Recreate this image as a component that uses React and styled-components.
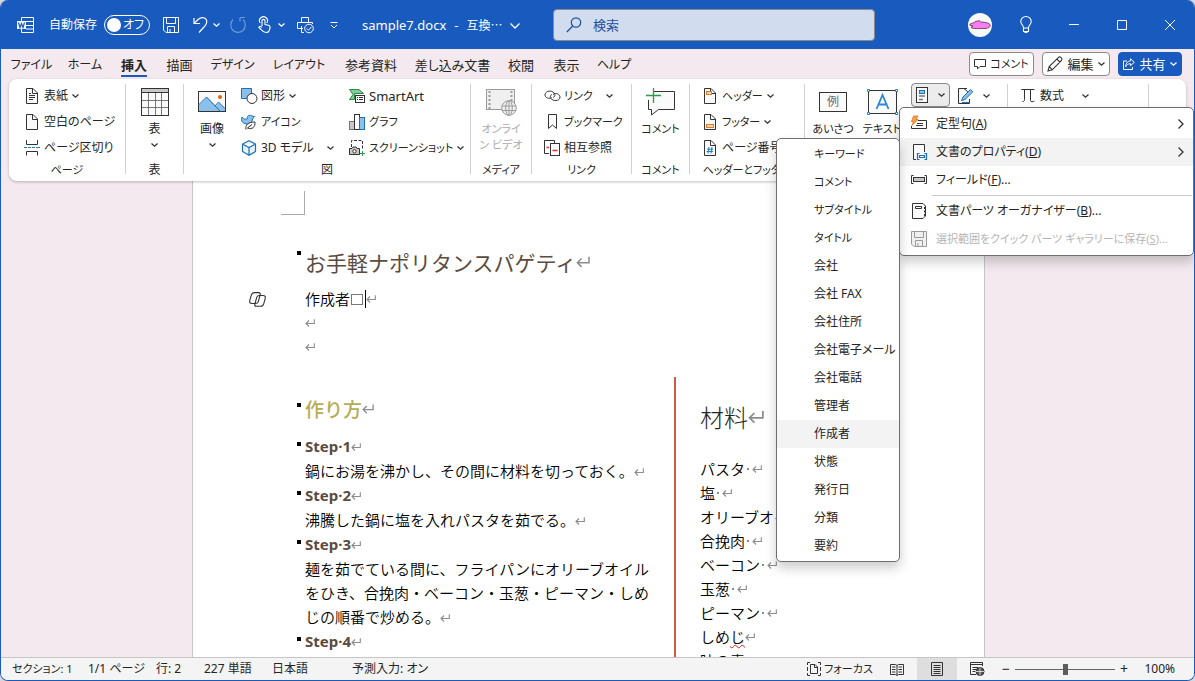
import React, { useState } from 'react'
import styled, { createGlobalStyle, css } from 'styled-components'

const BLUE = '#185abd'
const INK = '#333333'

const GlobalStyle = createGlobalStyle`
  * { box-sizing: border-box; }
  body {
    margin: 0;
    background: #d9d6dc;
    font-family: "Noto Sans", "Noto Sans CJK JP", sans-serif;
    font-size: 12px;
    line-height: 16px;
    color: #242424;
  }
  button, input {
    font: inherit;
    color: inherit;
  }
  button {
    border: 0;
    padding: 0;
    background: none;
    white-space: nowrap;
    font-feature-settings: "palt";
  }
  svg { display: block; flex: none; overflow: visible; }
`

/* ---------- icons ---------- */

const Svg = ({ w = 16, h = 16, color = INK, children }) => (
  <svg width={w} height={h} viewBox={`0 0 ${w} ${h}`} fill="none" stroke={color} aria-hidden="true">
    {children}
  </svg>
)

const Chevron = ({ color = INK, w = 7 }) => (
  <Svg w={w} h={4} color={color}>
    <path d={`M.5 .5L${w / 2} ${w > 8 ? 5 : 3.2}L${w - 0.5} .5`} strokeWidth="1.3" />
  </Svg>
)
const WordIcon = () => (
  <Svg w={17} color="#fff">
    <path d="M4.500 4V.5H16.500V15.500H4.500V12M9 4.500H16M9 8.500H16M9 12H16" />
    <rect x="0" y="4" width="9" height="8" fill="#fff" stroke="none" />
    <path d="M1.500 5.500L3 10.500L4.500 6.500L6 10.500L7.500 5.500" stroke={BLUE} strokeWidth="1.2" />
  </Svg>
)
const SaveIcon = ({ color = '#fff', fill = 'none' }) => (
  <Svg color={color}>
    <path d="M.5 .5H15.500V15.500H3L.5 13Z" fill={fill} />
    <path d="M3.500 .5V6.500H12.500V.5M4.500 15V9.500H11.500V15M7 12V15" />
  </Svg>
)
const UndoIcon = () => (
  <Svg w={15} color="#fff">
    <path d="M1 1V6.500H7M1.200 6.300L5 2.500C8 0 12 0 13.500 3C14.500 6 13 8 11 10L6 15.500" strokeWidth="1.2" />
  </Svg>
)
const RedoIcon = () => (
  <Svg color="#6f9ad8">
    <path d="M3 2.500C0 5.500 0 10.500 3 13.500C6 16 11 16 13.500 13C16 10 16 5 13 2.500M10 .5V4.500M10 .5H15" strokeWidth="1.2" />
  </Svg>
)
const TouchIcon = () => (
  <Svg w={13} h={17} color="#fff">
    <path d="M2.200 7A4 4 0 1 1 8.800 7" strokeWidth="1.1" />
    <path d="M4 10V4.500C4 3 7 3 7 4.500V8.500L10.500 9.200C12 9.600 12.300 10.500 12 12L11 15C10.500 16.300 9.500 16.500 8 16.500C5 16.500 4 14.500 2 12.500L.8 11.300C1.500 10 3 10 4 11.500" strokeWidth="1.1" />
  </Svg>
)
const PrinterIcon = () => (
  <Svg w={17} color="#fff">
    <path d="M4.500 5V.5H11.500V5M6 11.500H.5V5.500H15.500V7M4.500 9V15.500H7" />
    <circle cx="12" cy="11.500" r="4.300" />
    <path d="M9.800 11.500L11.500 13.300L14.500 9.800" />
  </Svg>
)
const CustomizeIcon = () => (
  <Svg w={8} h={8} color="#fff">
    <path d="M.5 1.500H7.500M1 4L4 7L7 4" />
  </Svg>
)
const SearchIcon = () => (
  <Svg color="#1d4f9e">
    <circle cx="10" cy="5.500" r="4.700" strokeWidth="1.200" />
    <path d="M6.700 9L.8 15" strokeWidth="1.200" />
  </Svg>
)
const Avatar = () => (
  <svg width="24" height="24" viewBox="0 0 24 24" role="img" aria-label="アカウント">
    <circle cx="12" cy="12" r="12" fill="#f7faf7" />
    <path d="M2 11C4 10 6 10 7 9C8 7 9 9 10 8C11 7 12 8 12.500 9C16 9 20 9.500 22 11.500C23 13 21 15.500 17 15.500C11 15.500 5 16 3 14.500L5 13L2 12.500Z" fill="#f77df0" stroke="#5c2b58" strokeWidth=".8" />
  </svg>
)
const BulbIcon = () => (
  <Svg w={12} h={17} color="#fff">
    <path d="M3.500 12C3.500 9 .8 8.500 .8 5.500A5.200 5 0 0 1 11.200 5.500C11.200 8.500 8.500 9 8.500 12ZM3.500 12V15.500H8.500V12M4.500 16.500H7.500" strokeWidth="1.1" />
  </Svg>
)
const MinIcon = () => <Svg w={10} h={10} color="#fff"><path d="M0 4.500H10" /></Svg>
const MaxIcon = () => <Svg w={10} h={10} color="#fff"><path d="M.5 .5H9.500V9.500H.5Z" /></Svg>
const CloseIcon = () => <Svg w={10} h={10} color="#fff"><path d="M0 0L10 10M10 0L0 10" /></Svg>

const BubbleIcon = () => (
  <Svg w={12} h={12}>
    <path d="M.5 1.500H11.500V8.500H6L3.500 11V8.500H.5Z" />
  </Svg>
)
const PencilIcon = () => (
  <Svg>
    <path d="M1 15L2.200 10.500L11.500 1.300C13 0 16 2.500 14.500 4.500L5.300 13.800ZM9.800 3L13 6.200M2.200 10.500L5.300 13.800" strokeWidth="1.1" />
  </Svg>
)
const ShareIcon = () => (
  <Svg w={12} h={12} color="#fff">
    <path d="M4 3H.5V11.500H9.500V9M7.500 .8L11.300 4.300L7.500 7.700V5.700C5 5.700 3.500 7 2.700 8.800C2.700 5.500 4.500 3 7.500 2.800Z" />
  </Svg>
)

const PageShape = () => <path d="M2.500 .5H9L13.500 5V15.500H2.500ZM8.500 .5V5.500H13.500" fill="#fafafa" />
const CoverIcon = () => <Svg><PageShape /><path d="M5 7.500H11M5 9.500H11M5 11.500H9M5 5.500H7" /></Svg>
const BlankIcon = () => <Svg><PageShape /></Svg>
const BreakIcon = () => (
  <Svg>
    <path d="M2.500 0V4.500H13.500V0M2.500 15.500V11.500H13.500V15.500" />
    <path d="M0 7.500H3M4 7.500H7M8 7.500H11M12 7.500H16" stroke="#1f7fc4" />
  </Svg>
)
const TableIcon = () => (
  <Svg w={28} h={28}>
    <rect x=".5" y=".5" width="27" height="27" fill="#fafafa" />
    <rect x="1" y="1" width="26" height="3" fill="#c8c8c8" stroke="none" />
    <path d="M.5 4.500H27.500" />
    <path d="M1 12.500H27M1 19.500H27M7.500 5V27M14.500 5V27M20.500 5V27" stroke="#777" />
  </Svg>
)
const ImageIcon = () => (
  <Svg w={28} h={22}>
    <rect x=".5" y=".5" width="27" height="20" fill="#fafafa" />
    <path d="M1 14L9 6L18 15L21 11.500L27 17.500V20H1Z" fill="#8bc0ea" stroke="none" />
    <path d="M.5 14L8.500 6L22.500 20.500M17 15L20.500 11L27 17.500" stroke="#1e6fb5" />
    <circle cx="22" cy="6" r="2" fill="#d9690f" stroke="none" />
  </Svg>
)
const ShapesIcon = () => (
  <Svg w={17}>
    <path d="M.5 .5H10.500V10.500H.5Z" fill="#8bc0ea" stroke="#1e6fb5" />
    <circle cx="11" cy="10.500" r="5" fill="#fafafa" />
  </Svg>
)
const DuckIcon = () => (
  <Svg>
    <path d="M1 3C3 6 5 5 6 5C6 1 9 .5 11 2L13.500 2.500L11.500 5C11.500 8 9 10 6 10C3 10 .5 8 .5 5.500Z" fill="#8bc0ea" stroke="#1e6fb5" />
    <path d="M5 15.500C4 11 7 8 14 8C14.500 13 11 16 6.500 14L11 10.500" fill="#fafafa" />
  </Svg>
)
const CubeIcon = () => (
  <Svg color="#1e6fb5">
    <path d="M8 .7L14.500 4V11.500L8 15.300L1.500 11.500V4ZM1.500 4L8 7.500L14.500 4M8 7.500V15" fill="#e6f3fc" strokeWidth="1.200" />
  </Svg>
)
const SmartArtIcon = () => (
  <Svg>
    <path d="M.5 1.500H10L14.500 5.500H5.500V11.500H.5L4 6.500Z" fill="#7fcf96" stroke="#2b8a45" />
    <rect x="6.500" y="7.500" width="9" height="7" fill="#fff" />
    <path d="M8 9.500H9M10 9.500H14M8 11.500H9M10 11.500H14" />
  </Svg>
)
const ChartIcon = () => (
  <Svg>
    <rect x=".5" y="7.500" width="5" height="8" fill="#c8c8c8" stroke="#777" />
    <rect x="5.500" y=".5" width="5" height="15" fill="#fff" />
    <rect x="10.500" y="3.500" width="5" height="12" fill="#8bc0ea" stroke="#1e6fb5" />
  </Svg>
)
const ScreenshotIcon = () => (
  <Svg>
    <path d="M2.500 7V.5H13.500V10" strokeDasharray="3 1.500" />
    <path d="M.5 8.500H3L4 7H7L8 8.500H10.500V14.500H.5Z" fill="#c8c8c8" />
    <circle cx="5.500" cy="11.300" r="1.700" fill="#fff" />
    <path d="M13.500 11V16M11 13.500H16" stroke="#2b9a4a" />
  </Svg>
)
const VideoIcon = () => (
  <Svg w={31} h={27} color="#9a9a9a">
    <rect x=".5" y=".5" width="28" height="20" fill="#f0f0f0" />
    <path d="M3.500 2V20M25.500 2V20" strokeWidth="2" strokeDasharray="2 2" />
    <circle cx="23" cy="19" r="7.300" fill="#f0f0f0" />
    <ellipse cx="23" cy="19" rx="3.300" ry="7.300" />
    <path d="M16 17H30M16 21.500H30M23 12V26" />
  </Svg>
)
const LinkIcon = () => (
  <Svg w={17}>
    <path d="M7.500 9.500C5 11.500 1 9.500 1 7C1 3.500 5.500 2 9 4C12 6 11 9 9 9.500" />
    <path d="M9 6.500C12 4 16 6.500 16 9C16 12.500 11.500 13.500 8 11.500C5.500 10 6 7 8 6.500" />
  </Svg>
)
const BookmarkIcon = () => <Svg><path d="M4.500 .5H12.500V14.500L8.500 11L4.500 14.500Z" fill="#fafafa" /></Svg>
const CrossRefIcon = () => (
  <Svg>
    <path d="M5 13.500H.5V.5H10.500V3" />
    <rect x="6.500" y="3.500" width="9" height="12" fill="#fafafa" />
    <path d="M2.500 7.500H5M8.500 10.500H13.500" stroke="#e03030" strokeWidth="1.3" />
  </Svg>
)
const CommentIcon = () => (
  <Svg w={29} h={28}>
    <path d="M8 3.500H28.500V21.500H12.500L5.500 27V21.500H2.500V12" fill="#fafafa" />
    <path d="M7.500 0V15M0 7.500H15" stroke="#2b9a4a" strokeWidth="1.3" />
  </Svg>
)
const HeaderIcon = () => <Svg><PageShape /><rect x="4.500" y="3.500" width="5" height="3" fill="#fbd5b5" stroke="#e07a1f" /></Svg>
const FooterIcon = () => <Svg><PageShape /><rect x="4.500" y="10.500" width="7" height="3" fill="#fbd5b5" stroke="#e07a1f" /></Svg>
const PageNumIcon = () => (
  <Svg><PageShape /><path d="M7 7L6 13.500M10 7L9 13.500M5 9.200H11.200M4.700 11.500H11" stroke="#1f7fc4" /></Svg>
)
const ExampleIcon = styled.span`
  width: 28px;
  height: 20px;
  border: 1px solid ${INK};
  background: #fafafa;
  color: #6a6a6a;
  line-height: 17px;
  text-align: center;
`
const TextBoxIcon = () => (
  <Svg w={31} h={26}>
    <rect x="1.500" y="1.500" width="28" height="23" fill="#fafafa" />
    <path d="M9.500 20L15.500 6L21.500 20M11.500 15.500H19.500" stroke="#2b88d8" strokeWidth="1.800" />
    <path d="M.5 .5h2v2h-2zM28.500 .5h2v2h-2zM.5 23.500h2v2h-2zM28.500 23.500h2v2h-2z" fill="#fff" stroke="#1f7fc4" />
  </Svg>
)
const PartsIcon = () => (
  <Svg w={13}>
    <rect x=".5" y=".5" width="11" height="15" fill="#fafafa" />
    <rect x="3.500" y="3.500" width="5" height="3" fill="#8bc0ea" stroke="#1e6fb5" />
    <path d="M3 9H9M3 12.500H7" stroke="#777" strokeWidth="1.500" />
  </Svg>
)
const SignatureIcon = () => (
  <Svg>
    <path d="M9 .5H.5V15.500H11.500V11M6 .5L11 5" fill="#fafafa" />
    <path d="M3.500 12.500L5 9L12.500 1.500L14.800 3.800L7 11.500Z" fill="#8bc0ea" stroke="#1e6fb5" />
    <path d="M4 14.500H12" stroke="#1e6fb5" />
  </Svg>
)
const PiIcon = () => <Svg w={14} h={14}><path d="M.5 1V.5H13.500M3.500 .5V10.500C3.500 12.500 2.500 12.500 1.500 12.500M9.500 .5V11.500C9.500 13 12 13 13.500 12" /></Svg>

const AutoTextIcon = () => (
  <Svg>
    <path d="M7 4.500H15.500V12.500H.5V10M6 7.500H12M5 9.500H12" />
    <path d="M2.500 0H7L5 3.500H7L1 9.500L2.500 5.500H.5Z" fill="#f7a34b" stroke="#d9690f" strokeWidth=".7" />
  </Svg>
)
const DocPropIcon = () => (
  <Svg>
    <path d="M5 15.500H2.500V.5H13.500V8" fill="#fafafa" />
    <path d="M8.500 9.500H6.500V15.500H8.500M13.500 9.500H15.500V15.500H13.500M8.500 11.500H13.500V13.500H8.500Z" stroke="#1e6fb5" strokeWidth="1.200" />
  </Svg>
)
const FieldIcon = () => (
  <Svg>
    <path d="M2.500 3.500H.5V11.500H2.500M13.500 3.500H15.500V11.500H13.500" />
    <rect x="2.500" y="5.500" width="11" height="4" fill="#c8c8c8" />
  </Svg>
)
const OrganizerIcon = () => (
  <Svg>
    <path d="M1.500 .5H12L14.500 3V13L12 15.500H1.500Z" fill="#fafafa" />
    <path d="M4.500 3.500H10.500V5.500H4.500ZM13.500 4V6M13.500 7.500V9.500M13.500 11V13" />
  </Svg>
)
const ArrowRight = () => <Svg w={6} h={10}><path d="M.5 .5L5 5L.5 9.500" strokeWidth="1.3" /></Svg>

const CopilotIcon = () => (
  <Svg w={17} h={15}>
    <path d="M5.500 .6H9.500C11.500 .6 11.500 2 11 3.500L9.200 9.800C8.800 11.200 8 11.500 6.500 11.500H3C.8 11.500 .3 10.300 .9 8.200L2.300 3.200C2.900 1.200 3.800 .6 5.500 .6Z" strokeWidth="1.100" />
    <path d="M11.500 14.300H7.500C5.500 14.300 5.500 13 6 11.500L7.800 5.200C8.200 3.800 9 3.500 10.500 3.500H14C16.200 3.500 16.700 4.700 16.100 6.800L14.700 11.800C14.100 13.800 13.200 14.300 11.500 14.300Z" strokeWidth="1.100" />
  </Svg>
)
const FocusIcon = () => (
  <Svg w={14} h={14}>
    <path d="M3 .5H.5V3M11 .5H13.500V3M.5 11V13.500H3M13.500 11V13.500H11M.5 5V9M13.500 5V9" />
    <path d="M3.500 2.500H8L10.500 5V11.500H3.500ZM7.500 2.500V5.500H10.500" />
  </Svg>
)
const ReadIcon = () => (
  <Svg w={14} h={13}>
    <path d="M.5 1.500H5.500L7 2.500L8.500 1.500H13.500V11.500H8.500L7 12.500L5.500 11.500H.5ZM7 2.500V12M2 4H5.500M2 6.500H5.500M2 9H5.500M8.500 4H12M8.500 6.500H12M8.500 9H12" />
  </Svg>
)
const PrintViewIcon = () => (
  <Svg w={12} h={14}>
    <path d="M.5 .5H11.500V13.500H.5ZM2.500 3.500H9.500M2.500 5.500H9.500M2.500 7.500H9.500M2.500 9.500H9.500M2.500 11.500H9.500" />
  </Svg>
)
const WebViewIcon = () => (
  <Svg w={14} h={14}>
    <path d="M6 12.500H.5V.5H12.500V4M.5 2.500H12.500M2.500 5.500H8M2.500 7.500H6M2.500 9.500H5" />
    <circle cx="10" cy="9.500" r="4" fill="#555" />
    <path d="M6 9.500H14M10 5.500V13.500" stroke="#f4f4f4" strokeWidth=".8" />
  </Svg>
)
const Mark = ({ size = 10 }) => (
  <svg width={size} height={size} viewBox="0 0 10 10" fill="none" stroke="#8c8c8c" strokeWidth="1.1" aria-hidden="true">
    <path d="M9.300 1.200V5.500H1M4 2.500L1 5.500L4 8.500" />
  </svg>
)

/* ---------- window and title bar ---------- */

const Window = styled.div`
  display: flex;
  flex-direction: column;
  height: 100vh;
  overflow: hidden;
  border: 1px solid ${BLUE};
  border-top: 0;
  border-radius: 8px;
  background: #f3e9ee;
`
const TitleBar = styled.header`
  display: flex;
  align-items: center;
  flex: none;
  height: 49px;
  padding-left: 6px;
  background: ${BLUE};
  color: #fff;
`
const QuickAccess = styled.div`
  display: flex;
  align-items: center;
  flex: 0 0 46%;
  font-feature-settings: "palt";
`
const Slot = styled.button`
  display: flex;
  align-items: center;
  justify-content: center;
  flex: none;
  width: ${p => p.$w}px;
  height: 32px;
`
const Toggle = styled.button`
  display: flex;
  align-items: center;
  justify-content: space-between;
  width: 46px;
  height: 20px;
  margin: 0 1px;
  padding: 0 5px 0 2px;
  border: 1px solid #fff;
  border-radius: 10px;
  &::before {
    content: "";
    width: 14px;
    height: 14px;
    border-radius: 50%;
    background: #fff;
  }
`
const FileName = styled.button`
  display: flex;
  align-items: center;
  gap: 8px;
  padding-left: 17px;
  font-size: 13px;
`
const Mode = styled.span`
  font-family: "Noto Sans CJK JP", sans-serif;
  font-size: 12px;
`
const SearchBox = styled.label`
  display: flex;
  align-items: center;
  gap: 11px;
  flex: 0 1 322px;
  height: 32px;
  padding-left: 12px;
  border: 1px solid #8a8a8a;
  border-radius: 4px;
  background: #d1dcee;
  input {
    flex: 1;
    min-width: 0;
    padding: 0;
    border: 0;
    outline: 0;
    background: none;
    font-size: 13px;
  }
  input::placeholder { color: #1d4f9e; opacity: 1; }
`
const Caption = styled.div`
  display: flex;
  margin-left: auto;
`

/* ---------- tabs ---------- */

const TabRow = styled.nav`
  display: flex;
  align-items: center;
  flex: none;
  height: 30px;
  padding: 0 12px 0 3px;
`
const Tab = styled.button`
  display: flex;
  flex-direction: column;
  align-items: center;
  flex: none;
  width: ${p => p.$w}px;
  padding-top: 4px;
  font-size: ${p => p.$size}px;
  line-height: 20px;
  font-weight: ${p => (p.$active ? 700 : 400)};
  &::after {
    content: "";
    width: 26px;
    height: 2px;
    background: ${p => (p.$active ? BLUE : 'transparent')};
  }
`
const Actions = styled.div`
  display: flex;
  gap: 8px;
  margin-left: auto;
`
const ActionButton = styled.button`
  display: flex;
  align-items: center;
  justify-content: center;
  gap: 4px;
  width: ${p => p.$w}px;
  height: 24px;
  border: 1px solid ${p => (p.$primary ? BLUE : '#8a8a8a')};
  border-radius: 4px;
  background: ${p => (p.$primary ? BLUE : '#fff')};
  color: ${p => (p.$primary ? '#fff' : '#242424')};
  font-size: ${p => p.$size || 13}px;
`

/* ---------- ribbon ---------- */

const RibbonBar = styled.div`
  display: flex;
  flex: none;
  position: relative;
  z-index: 2;
  height: 102px;
  margin: 0 8px;
  border-radius: 8px;
  background: #fff;
  box-shadow: 0 1px 3px rgba(0, 0, 0, .25);
`
const GroupBox = styled.section`
  display: flex;
  flex-direction: column;
  flex: none;
  width: ${p => p.$w}px;
  padding-top: 4px;
`
const GroupBody = styled.div`
  display: flex;
  height: 78px;
  padding-left: ${p => p.$pad || 0}px;
`
const GroupLabel = styled.div`
  text-align: center;
  font-size: ${p => p.$size}px;
  line-height: 18px;
  white-space: nowrap;
  font-feature-settings: "palt";
`
const Sep = styled.div`
  flex: none;
  width: 1px;
  margin: 5px 0 7px;
  background: #d1d1d1;
`
const Column = styled.div`
  display: flex;
  flex-direction: column;
  flex: none;
  width: ${p => p.$w}px;
`
const Small = styled.button`
  display: flex;
  align-items: center;
  gap: 3px;
  height: 26px;
  font-size: ${p => p.$size}px;
  > svg:last-child:not(:first-child) {
    margin-left: ${p => (p.$spread ? 'auto' : '1px')};
  }
`
const IconCell = styled.span`
  display: flex;
  justify-content: center;
  flex: none;
  width: 18px;
`
const Big = styled.button`
  display: flex;
  flex-direction: column;
  align-items: center;
  flex: none;
  width: ${p => p.$w}px;
  padding-top: 4px;
  color: ${p => (p.disabled ? '#ababab' : 'inherit')};
  font-size: ${p => p.$size}px;
  white-space: pre-line;
  > svg:last-child { margin-top: 6px; }
`
const BigIcon = styled.span`
  display: flex;
  align-items: center;
  justify-content: center;
  height: 30px;
  margin-bottom: 4px;
  font-size: 12px;
`
const Anchor = styled.div`
  position: relative;
  width: 39px;
  height: 26px;
  margin-left: 8px;
`
const SplitButton = styled.button`
  display: flex;
  align-items: center;
  justify-content: center;
  gap: 9px;
  width: ${p => p.$w}px;
  height: ${p => (p.$open ? 24 : 26)}px;
  ${p => p.$open && css`
    border: 1px solid #8a8a8a;
    border-radius: 4px;
    background: #ececec;
  `}
`

/* ---------- menus ---------- */

const menuBox = css`
  position: absolute;
  margin: 0;
  list-style: none;
  border: 1px solid #6e6e6e;
  border-radius: 5px;
  background: #fff;
  box-shadow: 0 6px 12px rgba(0, 0, 0, .2);
`
const PartsMenu = styled.ul`
  ${menuBox}
  top: 24px;
  left: -12px;
  width: 295px;
  padding: 2px 0;
`
const SubMenu = styled.ul`
  ${menuBox}
  top: 0;
  right: 100%;
  width: 124px;
  padding: 1px 0;
`
const MenuRow = styled.li`
  position: relative;
`
const MenuItem = styled.button`
  display: flex;
  align-items: center;
  gap: 9px;
  width: 100%;
  height: 28px;
  padding: 0 9px 0 ${p => (p.$sub ? 37 : 11)}px;
  background: ${p => (p.$active ? '#f3f3f3' : 'none')};
  color: ${p => (p.disabled ? '#b5b5b5' : '#242424')};
  font-size: ${p => p.$size || 12}px;
  text-align: left;
  > svg:last-child:not(:first-child) { margin-left: auto; }
`
const Divider = styled.li`
  height: 1px;
  margin: 1px 1px 1px 32px;
  background: #c8c8c8;
`

/* ---------- document ---------- */

const Canvas = styled.main`
  display: flex;
  justify-content: center;
  flex: 1;
  min-height: 0;
  padding-right: 18px;
  overflow: hidden;
`
const Sheet = styled.article`
  display: flex;
  flex-direction: column;
  flex: 0 1 793px;
  border: 1px solid #c6c6c6;
  border-width: 0 1px;
  background: #fff;
  color: #000;
  font-family: "Noto Sans CJK JP", sans-serif;
  font-size: 15px;
  font-weight: 350;
  line-height: 24px;
`
const CornerMark = styled.div`
  flex: none;
  width: 24px;
  height: 24px;
  margin: 10px 0 28px 88px;
  border: 1px solid #aaa;
  border-width: 0 1px 1px 0;
`
const Line = styled.div`
  display: grid;
  flex: none;
  grid-template-columns: 112px 1fr;
  align-items: center;
`
const Gutter = styled.div`
  display: flex;
  align-self: ${p => (p.$bullet ? 'start' : 'center')};
  padding-left: 56px;
  ${p => p.$bullet && css`
    justify-content: flex-end;
    padding: 8px 4px 0 0;
    &::before {
      content: "";
      width: 4px;
      height: 4px;
      background: #000;
    }
  `}
`
const inlineText = css`
  display: flex;
  align-items: center;
  margin: 0;
  white-space: nowrap;
`
const DocTitle = styled.h1`
  ${inlineText}
  margin-bottom: 6px;
  font-size: 21px;
  line-height: 38px;
  font-weight: 400;
  color: #5b4c3f;
`
const HowTo = styled.h2`
  ${inlineText}
  margin-bottom: 11px;
  font-size: 19px;
  line-height: 28px;
  font-weight: 500;
  color: #b5ad54;
`
const StepTitle = styled.h3`
  ${inlineText}
  font-family: "Noto Sans", sans-serif;
  font-size: 15px;
  line-height: 25px;
  font-weight: 700;
  color: #5b4c3f;
`
const Plain = styled.p`
  ${inlineText}
  min-height: 24px;
`
const Placeholder = styled.span`
  width: 12px;
  height: 11px;
  margin: 0 2px 0 1px;
  border: 1px solid #777;
`
const Caret = styled.span`
  width: 1px;
  height: 18px;
  background: #000;
`
const Columns = styled.div`
  display: flex;
  flex: 1;
  min-height: 0;
  margin-top: 18px;
`
const Method = styled.section`
  flex: none;
  width: 483px;
  padding-top: 18px;
  border-right: 2px solid #cf5b45;
`
const StepText = styled.p`
  margin: 0 23px 0 112px;
  line-break: strict;
  svg { display: inline-block; }
`
const Ingredients = styled.section`
  flex: 1;
  min-width: 0;
  padding: 24px 0 0 24px;
  h2 {
    ${inlineText}
    margin-bottom: 24px;
    font-size: 24px;
    line-height: 32px;
    font-weight: 300;
    color: #242424;
  }
  ul {
    margin: 0;
    padding: 0;
    list-style: none;
  }
  li {
    ${inlineText}
    height: 24px;
  }
`
const Space = styled.span`
  width: 2px;
  height: 2px;
  margin: 0 3px 0 2px;
  background: #8c8c8c;
`
const Misspelt = styled.span`
  text-decoration: underline wavy #e02020 1px;
`

/* ---------- status bar ---------- */

const StatusBar = styled.footer`
  display: flex;
  align-items: center;
  flex: none;
  height: 23px;
  padding: 0 19px 0 11px;
  border-top: 1px solid #c6c6c6;
  background: #f4f4f4;
`
const StatusItem = styled.button`
  flex: none;
  width: ${p => p.$w}px;
  font-size: ${p => p.$size || 12}px;
  text-align: ${p => (p.$end ? 'right' : 'left')};
`
const StatusRight = styled.div`
  display: flex;
  align-items: center;
  margin-left: auto;
  height: 100%;
`
const Views = styled.div`
  display: flex;
  height: 100%;
  margin-right: 4px;
`
const ViewButton = styled.button`
  display: flex;
  align-items: center;
  justify-content: center;
  gap: 3px;
  width: ${p => p.$w || 40}px;
  height: 100%;
  background: ${p => (p.$active ? '#dedede' : 'none')};
  font-size: 11px;
`
const ZoomStep = styled.button`
  width: 10px;
  font-size: 14px;
`
const ZoomSlider = styled.input`
  appearance: none;
  width: 100px;
  height: 12px;
  margin: 0 4px;
  background: linear-gradient(#666, #666) center / 100% 1px no-repeat;
  &::-webkit-slider-thumb {
    appearance: none;
    width: 5px;
    height: 11px;
    background: #5c5c5c;
  }
`

const tabs = [
  ['ファイル', 55], ['ホーム', 52], ['挿入', 46], ['描画', 45], ['デザイン', 61], ['レイアウト', 72],
  ['参考資料', 72], ['差し込み文書', 91], ['校閲', 46], ['表示', 45], ['ヘルプ', 50],
]
const properties = [
  'キーワード', 'コメント', 'サブタイトル', 'タイトル', '会社', '会社 FAX', '会社住所', '会社電子メール',
  '会社電話', '管理者', '作成者', '状態', '発行日', '分類', '要約',
]
const steps = [
  '鍋にお湯を沸かし、その間に材料を切っておく。',
  '沸騰した鍋に塩を入れパスタを茹でる。',
  '麺を茹でている間に、フライパンにオリーブオイルをひき、合挽肉・ベーコン・玉葱・ピーマン・しめじの順番で炒める。',
  '',
]
const ingredients = ['パスタ', '塩', 'オリーブオイル', '合挽肉', 'ベーコン', '玉葱', 'ピーマン', 'しめじ', '味の素']

// kana-only labels are set one size smaller than those with kanji
const labelSize = (text, base = 12) => (/^[\u3040-\u30ff\s]+$/.test(text) ? base - 1 : base)

const Group = ({ w, pad, label, children }) => (
  <GroupBox $w={w}>
    <GroupBody $pad={pad}>{children}</GroupBody>
    <GroupLabel $size={labelSize(label)}>{label}</GroupLabel>
  </GroupBox>
)

const SmallButton = ({ icon, label, chevron, spread, latin }) => (
  <Small $spread={spread} $size={latin ? 13 : labelSize(label)}>
    <IconCell>{icon}</IconCell>
    <span>{label}</span>
    {chevron && <Chevron />}
  </Small>
)

const BigButton = ({ w, icon, label, chevron, disabled }) => (
  <Big $w={w} $size={labelSize(label)} disabled={disabled}>
    <BigIcon>{icon}</BigIcon>
    <span>{label}</span>
    {chevron && <Chevron />}
  </Big>
)

const Key = ({ k, dots }) => <>(<u>{k}</u>){dots && '...'}</>

const QuickPartsMenu = () => (
  <PartsMenu>
    <MenuRow>
      <MenuItem><AutoTextIcon /><span>定型句<Key k="A" /></span><ArrowRight /></MenuItem>
    </MenuRow>
    <MenuRow>
      <MenuItem $active><DocPropIcon /><span>文書のプロパティ<Key k="D" /></span><ArrowRight /></MenuItem>
      <SubMenu>
        {properties.map(name => (
          <li key={name}>
            <MenuItem $sub $size={labelSize(name)} $active={name === '作成者'}>{name}</MenuItem>
          </li>
        ))}
      </SubMenu>
    </MenuRow>
    <MenuRow>
      <MenuItem><FieldIcon /><span>フィールド<Key k="F" dots /></span></MenuItem>
    </MenuRow>
    <Divider />
    <MenuRow>
      <MenuItem><OrganizerIcon /><span>文書パーツ オーガナイザー<Key k="B" dots /></span></MenuItem>
    </MenuRow>
    <MenuRow>
      <MenuItem $size={11} disabled>
        <SaveIcon color="#9a9a9a" fill="#f0f0f0" />
        <span>選択範囲をクイック パーツ ギャラリーに保存<Key k="S" dots /></span>
      </MenuItem>
    </MenuRow>
  </PartsMenu>
)

const Ribbon = () => {
  const [open, setOpen] = useState(true)

  return (
    <RibbonBar>
      <Group w={116} pad={14} label="ページ">
        <Column $w={100}>
          <SmallButton icon={<CoverIcon />} label="表紙" chevron />
          <SmallButton icon={<BlankIcon />} label="空白のページ" />
          <SmallButton icon={<BreakIcon />} label="ページ区切り" />
        </Column>
      </Group>
      <Sep />
      <Group w={57} label="表">
        <BigButton w={57} icon={<TableIcon />} label="表" chevron />
      </Group>
      <Sep />
      <Group w={286} label="図">
        <BigButton w={56} icon={<ImageIcon />} label="画像" chevron />
        <Column $w={108}>
          <SmallButton icon={<ShapesIcon />} label="図形" chevron />
          <SmallButton icon={<DuckIcon />} label="アイコン" />
          <Column $w={94}>
            <SmallButton icon={<CubeIcon />} label="3D モデル" chevron spread />
          </Column>
        </Column>
        <Column $w={114}>
          <SmallButton icon={<SmartArtIcon />} label="SmartArt" latin />
          <SmallButton icon={<ChartIcon />} label="グラフ" />
          <SmallButton icon={<ScreenshotIcon />} label="スクリーンショット" chevron />
        </Column>
      </Group>
      <Sep />
      <Group w={60} label="メディア">
        <BigButton w={60} icon={<VideoIcon />} label={'オンライ\nン ビデオ'} disabled />
      </Group>
      <Sep />
      <Group w={99} pad={11} label="リンク">
        <Column $w={70}>
          <SmallButton icon={<LinkIcon />} label="リンク" chevron spread />
          <SmallButton icon={<BookmarkIcon />} label="ブックマーク" />
          <SmallButton icon={<CrossRefIcon />} label="相互参照" />
        </Column>
      </Group>
      <Sep />
      <Group w={57} label="コメント">
        <BigButton w={57} icon={<CommentIcon />} label="コメント" />
      </Group>
      <Sep />
      <Group w={114} pad={11} label="ヘッダーとフッター">
        <Column $w={100}>
          <SmallButton icon={<HeaderIcon />} label="ヘッダー" chevron />
          <SmallButton icon={<FooterIcon />} label="フッター" chevron />
          <SmallButton icon={<PageNumIcon />} label="ページ番号" chevron />
        </Column>
      </Group>
      <Sep />
      <Group w={202} label="テキスト">
        <BigButton w={56} icon={<ExampleIcon>例</ExampleIcon>} label="あいさつ" />
        <BigButton w={42} icon={<TextBoxIcon />} label={'テキスト\nボックス'} />
        <Anchor>
          <SplitButton $w={39} $open aria-label="クイック パーツ" aria-expanded={open} onClick={() => setOpen(!open)}>
            <PartsIcon /><Chevron />
          </SplitButton>
          {open && <QuickPartsMenu />}
        </Anchor>
        <SplitButton $w={48} aria-label="署名欄"><SignatureIcon /><Chevron /></SplitButton>
      </Group>
      <Sep />
      <Group w={140} pad={11} label="記号と特殊文字">
        <Column $w={70}>
          <SmallButton icon={<PiIcon />} label="数式" chevron spread />
        </Column>
      </Group>
      <Sep />
    </RibbonBar>
  )
}

const Document = () => (
  <Canvas>
    <Sheet>
      <CornerMark />
      <Line>
        <Gutter $bullet />
        <DocTitle>お手軽ナポリタンスパゲティ<Mark size={14} /></DocTitle>
      </Line>
      <Line>
        <Gutter><CopilotIcon /></Gutter>
        <Plain>作成者<Placeholder /><Caret /><Mark /></Plain>
      </Line>
      <Line><Gutter /><Plain><Mark /></Plain></Line>
      <Line><Gutter /><Plain><Mark /></Plain></Line>
      <Columns>
        <Method>
          <Line>
            <Gutter $bullet />
            <HowTo>作り方<Mark size={12} /></HowTo>
          </Line>
          {steps.map((text, i) => (
            <React.Fragment key={i}>
              <Line>
                <Gutter $bullet />
                <StepTitle>Step·{i + 1}<Mark /></StepTitle>
              </Line>
              {text && <StepText>{text}<Mark /></StepText>}
            </React.Fragment>
          ))}
        </Method>
        <Ingredients>
          <h2>材料<Mark size={16} /></h2>
          <ul>
            {ingredients.map(name => (
              <li key={name}>
                {name === 'しめじ' ? <>しめ<Misspelt>じ</Misspelt></> : <>{name}<Space /></>}
                <Mark />
              </li>
            ))}
          </ul>
        </Ingredients>
      </Columns>
    </Sheet>
  </Canvas>
)

const App = () => {
  const [zoom, setZoom] = useState(100)

  return (
    <>
      <GlobalStyle />
      <Window>
        <TitleBar>
          <QuickAccess>
            <Slot $w={36} aria-label="Word"><WordIcon /></Slot>
            <Slot as="span" $w={60} id="autosave">自動保存</Slot>
            <Toggle role="switch" aria-checked="false" aria-labelledby="autosave">オフ</Toggle>
            <Slot $w={40} aria-label="上書き保存"><SaveIcon /></Slot>
            <Slot $w={18} aria-label="元に戻す"><UndoIcon /></Slot>
            <Slot $w={14} aria-label="元に戻す一覧"><Chevron color="#fff" /></Slot>
            <Slot $w={30} aria-label="繰り返し"><RedoIcon /></Slot>
            <Slot $w={22} aria-label="タッチ"><TouchIcon /></Slot>
            <Slot $w={12} aria-label="タッチ一覧"><Chevron color="#fff" /></Slot>
            <Slot $w={36} aria-label="印刷"><PrinterIcon /></Slot>
            <Slot $w={22} aria-label="カスタマイズ"><CustomizeIcon /></Slot>
            <FileName>
              <span>sample7.docx</span><span>-</span><Mode>互換…</Mode><Chevron color="#fff" w={10} />
            </FileName>
          </QuickAccess>
          <SearchBox>
            <SearchIcon />
            <input type="text" placeholder="検索" aria-label="検索" />
          </SearchBox>
          <Caption>
            <Slot $w={44} aria-label="アカウント"><Avatar /></Slot>
            <Slot $w={48} aria-label="ヒント"><BulbIcon /></Slot>
            <Slot $w={48} aria-label="最小化"><MinIcon /></Slot>
            <Slot $w={48} aria-label="最大化"><MaxIcon /></Slot>
            <Slot $w={48} aria-label="閉じる"><CloseIcon /></Slot>
          </Caption>
        </TitleBar>
        <TabRow>
          {tabs.map(([name, w]) => (
            <Tab key={name} $w={w} $size={labelSize(name, 13)} $active={name === '挿入'}>{name}</Tab>
          ))}
          <Actions>
            <ActionButton $w={65} $size={11}><BubbleIcon />コメント</ActionButton>
            <ActionButton $w={68}><PencilIcon />編集<Chevron /></ActionButton>
            <ActionButton $w={64} $primary><ShareIcon />共有<Chevron color="#fff" /></ActionButton>
          </Actions>
        </TabRow>
        <Ribbon />
        <Document />
        <StatusBar>
          <StatusItem $w={76} $size={11}>セクション: 1</StatusItem>
          <StatusItem $w={68}>1/1 ページ</StatusItem>
          <StatusItem $w={48}>行: 2</StatusItem>
          <StatusItem $w={68}>227 単語</StatusItem>
          <StatusItem $w={80}>日本語</StatusItem>
          <StatusItem $w={90}>予測入力: オン</StatusItem>
          <StatusRight>
            <Views>
              <ViewButton $w={74}><FocusIcon />フォーカス</ViewButton>
              <ViewButton aria-label="閲覧モード"><ReadIcon /></ViewButton>
              <ViewButton $active aria-label="印刷レイアウト"><PrintViewIcon /></ViewButton>
              <ViewButton aria-label="Web レイアウト"><WebViewIcon /></ViewButton>
            </Views>
            <ZoomStep aria-label="縮小">−</ZoomStep>
            <ZoomSlider
              type="range"
              min="0"
              max="200"
              value={zoom}
              aria-label="ズーム"
              onChange={e => setZoom(Number(e.target.value))}
            />
            <ZoomStep aria-label="拡大">+</ZoomStep>
            <StatusItem as="output" $w={46} $end>{zoom}%</StatusItem>
          </StatusRight>
        </StatusBar>
      </Window>
    </>
  )
}

export default App
